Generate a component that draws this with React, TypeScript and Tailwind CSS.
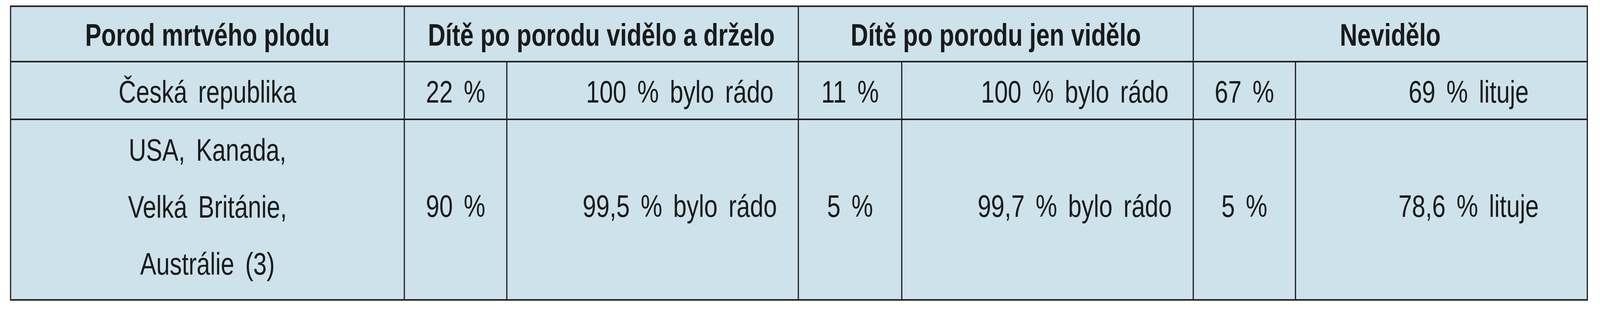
import React, { useEffect, useState } from "react";

const cell =
  "bg-[#cde2eb] flex items-center justify-center text-[80px] leading-none whitespace-nowrap";
const head = `${cell} font-bold pt-[6px]`;
const r1Num = `${cell} pt-[8px] [word-spacing:14px]`;
const r1Txt = `${cell} pt-[8px] pl-[180px] [word-spacing:14px]`;
const r2Num = `${cell} pb-[17px] [word-spacing:14px]`;
const r2Txt = `${cell} pb-[17px] pl-[180px] [word-spacing:14px]`;

export default function App() {
  const [sx, setSx] = useState(() =>
    typeof window !== "undefined" ? window.innerWidth / 5291 : 1
  );
  useEffect(() => {
    const onResize = () => setSx(window.innerWidth / 5291);
    window.addEventListener("resize", onResize);
    return () => window.removeEventListener("resize", onResize);
  }, []);

  return (
    <div className="w-full h-[800px] bg-white overflow-hidden">
      <div
        className="w-[5291px] h-[800px] pt-[14px] pl-[33px] origin-top-left font-['Liberation_Sans',Arial,sans-serif] text-[#1a1a1a]"
        style={{ transform: `scaleX(${sx})` }}
      >
        <div className="w-[5218px] grid grid-cols-[1298px_335px_960px_338px_960px_334px_961px] grid-rows-[138px_144px_459px] gap-[4px] p-[4px] bg-[#222]">
          <div className={head}>Porod mrtvého plodu</div>
          <div className={`${head} col-span-2`}>Dítě po porodu vidělo a drželo</div>
          <div className={`${head} col-span-2`}>Dítě po porodu jen vidělo</div>
          <div className={`${head} col-span-2`}>Nevidělo</div>

          <div className={r1Num}>Česká republika</div>
          <div className={r1Num}>22 %</div>
          <div className={r1Txt}>100 % bylo rádo</div>
          <div className={r1Num}>11 %</div>
          <div className={r1Txt}>100 % bylo rádo</div>
          <div className={r1Num}>67 %</div>
          <div className={r1Txt}>69 % lituje</div>

          <div className="bg-[#cde2eb] flex flex-col items-center justify-start pt-[4px] text-[80px] leading-[146px] whitespace-nowrap [word-spacing:14px]">
            <p>USA, Kanada,</p>
            <p>Velká Británie,</p>
            <p>Austrálie (3)</p>
          </div>
          <div className={r2Num}>90 %</div>
          <div className={r2Txt}>99,5 % bylo rádo</div>
          <div className={r2Num}>5 %</div>
          <div className={r2Txt}>99,7 % bylo rádo</div>
          <div className={r2Num}>5 %</div>
          <div className={r2Txt}>78,6 % lituje</div>
        </div>
      </div>
    </div>
  );
}
